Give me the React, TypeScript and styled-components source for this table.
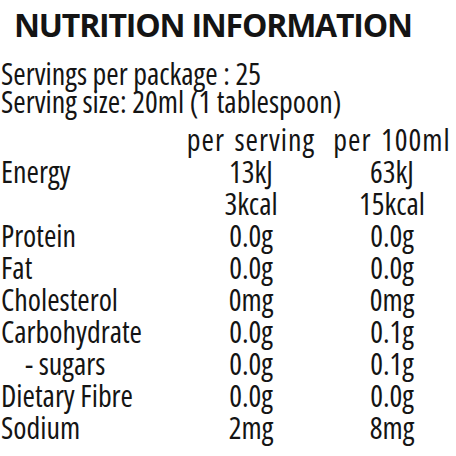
import { Fragment } from "react";
import styled, { createGlobalStyle } from "styled-components";

const GlobalStyle = createGlobalStyle`
  html, body {
    margin: 0;
    padding: 0;
    background: #ffffff;
  }
  body {
    width: 456px;
    height: 456px;
    overflow: hidden;
    font-family: "Open Sans", Roboto, sans-serif;
    font-stretch: 78%;
    color: #141414;
  }
`;

const Panel = styled.div`
  width: 456px;
  height: 456px;
  padding: 5px 0 0 1px;
  box-sizing: border-box;
  overflow: hidden;
`;

const Title = styled.h1`
  margin: 0 0 15px 13px;
  font-size: 32px;
  line-height: 40px;
  font-weight: bold;
  font-stretch: 100%;
  letter-spacing: -1.2px;
  white-space: nowrap;
`;

const Intro = styled.div`
  font-size: 30px;
  line-height: 28px;
  white-space: nowrap;
`;

const Table = styled.div`
  display: grid;
  grid-template-columns: 179px 142px 140px;
  margin-top: 8px;
  font-size: 30px;
  line-height: 32px;
  white-space: nowrap;
`;

const Label = styled.div<{ $indent?: boolean }>`
  padding-left: ${({ $indent }) => ($indent ? "24px" : "0")};
`;

const Value = styled.div<{ $head?: boolean }>`
  text-align: center;
  letter-spacing: ${({ $head }) => ($head ? "1px" : "0")};
  word-spacing: ${({ $head }) => ($head ? "3px" : "0")};
`;

type Row = [string, string, string, boolean?];

const rows: Row[] = [
  ["", "per serving", "per 100ml"],
  ["Energy", "13kJ", "63kJ"],
  ["", "3kcal", "15kcal"],
  ["Protein", "0.0g", "0.0g"],
  ["Fat", "0.0g", "0.0g"],
  ["Cholesterol", "0mg", "0mg"],
  ["Carbohydrate", "0.0g", "0.1g"],
  ["- sugars", "0.0g", "0.1g", true],
  ["Dietary Fibre", "0.0g", "0.0g"],
  ["Sodium", "2mg", "8mg"],
];

export default function App() {
  return (
    <>
      <GlobalStyle />
      <Panel>
        <Title>NUTRITION INFORMATION</Title>
        <Intro>Servings per package : 25</Intro>
        <Intro>Serving size: 20ml (1 tablespoon)</Intro>
        <Table>
          {rows.map(([label, serving, per100, indent], i) => (
            <Fragment key={i}>
              <Label $indent={indent}>{label}</Label>
              <Value $head={i === 0}>{serving}</Value>
              <Value $head={i === 0}>{per100}</Value>
            </Fragment>
          ))}
        </Table>
      </Panel>
    </>
  );
}
